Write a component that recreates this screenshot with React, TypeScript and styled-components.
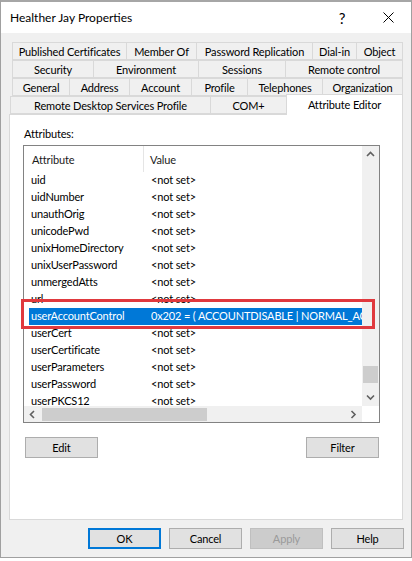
import styled, { createGlobalStyle } from "styled-components";

const GlobalStyle = createGlobalStyle`
  html, body {
    margin: 0;
    padding: 0;
    background: #ffffff;
  }
  body {
    font-family: Lato, "Liberation Sans", sans-serif;
    font-size: 11px;
    letter-spacing: -0.15px;
    color: #000;
  }
  * {
    box-sizing: border-box;
  }
`;

const Window = styled.div`
  width: 412px;
  height: 558px;
  display: flex;
  flex-direction: column;
  border: 1px solid #a0a0a0;
  border-top: 2px solid #a6a6a6;
  background: #f0f0f0;
`;

const TitleBar = styled.div`
  height: 31px;
  flex: none;
  display: flex;
  align-items: center;
  background: #ffffff;
  padding-left: 9px;
`;

const Title = styled.div`
  flex: 1;
  font-size: 12px;
  letter-spacing: 0;
  color: #000;
`;

const CaptionButton = styled.div`
  width: 46px;
  height: 31px;
  display: flex;
  align-items: center;
  justify-content: center;
  font-size: 15px;
`;

const Body = styled.div`
  flex: 1;
  display: flex;
  flex-direction: column;
  padding: 9px 8px 8px 8px;
`;

const TabStrip = styled.div`
  display: flex;
  flex-direction: column;
`;

const TabRow = styled.div<{ $inset: number }>`
  display: flex;
  align-items: flex-end;
  height: 18px;
  padding-left: ${(p) => p.$inset}px;
`;

const Tab = styled.div<{ $w: number; $active?: boolean }>`
  flex: none;
  width: ${(p) => p.$w + 1}px;
  height: ${(p) => (p.$active ? 21 : 18)}px;
  margin-right: -1px;
  margin-bottom: ${(p) => (p.$active ? -1 : 0)}px;
  z-index: ${(p) => (p.$active ? 2 : 0)};
  border: 1px solid #d9d9d9;
  border-bottom: ${(p) => (p.$active ? "none" : "1px solid #d9d9d9")};
  background: ${(p) => (p.$active ? "#ffffff" : "#f0f0f0")};
  display: flex;
  align-items: center;
  justify-content: center;
  white-space: nowrap;
  padding-bottom: ${(p) => (p.$active ? 2 : 0)}px;
`;

const Panel = styled.div`
  height: 406px;
  flex: none;
  background: #ffffff;
  border: 1px solid #d9d9d9;
  padding: 11px 13px 0 13px;
  display: flex;
  flex-direction: column;
`;

const FieldLabel = styled.div`
  line-height: 15px;
  padding-left: 1px;
  margin-bottom: 4px;
`;

const ListWrap = styled.div`
  position: relative;
  width: 357px;
  height: 278px;
`;

const ListBox = styled.div`
  width: 100%;
  height: 100%;
  border: 1px solid #828282;
  display: grid;
  grid-template-columns: 1fr 17px;
  grid-template-rows: 1fr 16px;
  background: #ffffff;
`;

const ListContent = styled.div`
  overflow: hidden;
  display: flex;
  flex-direction: column;
`;

const HeaderRow = styled.div`
  height: 26px;
  flex: none;
  display: grid;
  grid-template-columns: 120px 1fr;
  color: #1a1a1a;
`;

const HeaderCell = styled.div<{ $first?: boolean }>`
  display: flex;
  align-items: center;
  padding-left: ${(p) => (p.$first ? 8 : 6)}px;
  border-right: ${(p) => (p.$first ? "1px solid #e5e5e5" : "none")};
`;

const ItemRow = styled.div<{ $selected?: boolean }>`
  height: 17px;
  flex: none;
  margin-left: 5px;
  display: grid;
  grid-template-columns: 122px 1fr;
  line-height: 16px;
  white-space: nowrap;
  background: ${(p) => (p.$selected ? "#0078d7" : "transparent")};
  color: ${(p) => (p.$selected ? "#ffffff" : "#000")};
`;

const ItemCell = styled.div<{ $first?: boolean }>`
  overflow: hidden;
  padding-left: ${(p) => (p.$first ? 2 : 0)}px;
`;

const VScroll = styled.div`
  background: #f0f0f0;
  display: flex;
  flex-direction: column;
`;

const HScroll = styled.div`
  background: #f0f0f0;
  display: flex;
`;

const ArrowBox = styled.div<{ $horizontal?: boolean }>`
  flex: none;
  width: 17px;
  height: ${(p) => (p.$horizontal ? 16 : 17)}px;
  display: flex;
  align-items: center;
  justify-content: center;
`;

const Track = styled.div`
  flex: 1;
  position: relative;
`;

const VThumb = styled.div`
  position: absolute;
  left: 1px;
  right: 1px;
  height: 17px;
  background: #cdcdcd;
`;

const HThumb = styled.div`
  position: absolute;
  top: 2px;
  bottom: 1px;
  background: #cdcdcd;
`;

const Corner = styled.div`
  background: #ffffff;
`;

const Callout = styled.div`
  position: absolute;
  left: -2px;
  top: 154px;
  width: 354px;
  height: 30px;
  border: 3px solid #e0393e;
  pointer-events: none;
`;

const ButtonRow = styled.div`
  display: flex;
  justify-content: space-between;
  width: 357px;
  margin-top: 14px;
  padding: 0 1px 0 2px;
`;

const Button = styled.div<{ $default?: boolean; $disabled?: boolean }>`
  width: 73px;
  height: 21px;
  display: flex;
  align-items: center;
  justify-content: center;
  background: ${(p) => (p.$disabled ? "#cccccc" : "#e1e1e1")};
  border: ${(p) =>
    p.$default ? "2px solid #0078d7" : p.$disabled ? "1px solid #bfbfbf" : "1px solid #adadad"};
  color: ${(p) => (p.$disabled ? "#9a9a9a" : "#000")};
`;

const Footer = styled.div`
  display: flex;
  justify-content: flex-end;
  gap: 8px;
  margin-top: 8px;
  margin-right: -1px;
`;

const Chevron = ({ dir }: { dir: "up" | "down" | "left" | "right" }) => {
  const pts = {
    up: "1,5 4.5,1.5 8,5",
    down: "1,1.5 4.5,5 8,1.5",
    left: "5,1 1.5,4.5 5,8",
    right: "1.5,1 5,4.5 1.5,8",
  }[dir];
  const vertical = dir === "up" || dir === "down";
  return (
    <svg width={vertical ? 9 : 7} height={vertical ? 7 : 9} viewBox={vertical ? "0 0 9 7" : "0 0 7 9"}>
      <polyline points={pts} fill="none" stroke="#606060" strokeWidth="1.6" />
    </svg>
  );
};

const tabRows: { inset: number; tabs: [string, number, boolean?][] }[] = [
  {
    inset: 3,
    tabs: [
      ["Published Certificates", 114],
      ["Member Of", 70],
      ["Password Replication", 116],
      ["Dial-in", 44],
      ["Object", 46],
    ],
  },
  {
    inset: 3,
    tabs: [
      ["Security", 81],
      ["Environment", 105],
      ["Sessions", 87],
      ["Remote control", 117],
    ],
  },
  {
    inset: 3,
    tabs: [
      ["General", 57],
      ["Address", 60],
      ["Account", 62],
      ["Profile", 56],
      ["Telephones", 75],
      ["Organization", 80],
    ],
  },
  {
    inset: 1,
    tabs: [
      ["Remote Desktop Services Profile", 200],
      ["COM+", 76],
      ["Attribute Editor", 116, true],
    ],
  },
];

const attributes: [string, string][] = [
  ["uid", "<not set>"],
  ["uidNumber", "<not set>"],
  ["unauthOrig", "<not set>"],
  ["unicodePwd", "<not set>"],
  ["unixHomeDirectory", "<not set>"],
  ["unixUserPassword", "<not set>"],
  ["unmergedAtts", "<not set>"],
  ["url", "<not set>"],
  ["userAccountControl", "0x202 = ( ACCOUNTDISABLE | NORMAL_ACCOUNT )"],
  ["userCert", "<not set>"],
  ["userCertificate", "<not set>"],
  ["userParameters", "<not set>"],
  ["userPassword", "<not set>"],
  ["userPKCS12", "<not set>"],
];

export default function App() {
  const selected = "userAccountControl";

  return (
    <>
      <GlobalStyle />
      <Window>
        <TitleBar>
          <Title>Healther Jay Properties</Title>
          <CaptionButton>?</CaptionButton>
          <CaptionButton>
            <svg width="11" height="11" viewBox="0 0 11 11">
              <path d="M0.5 0.5 L10.5 10.5 M10.5 0.5 L0.5 10.5" stroke="#000" strokeWidth="1" />
            </svg>
          </CaptionButton>
        </TitleBar>

        <Body>
          <TabStrip>
            {tabRows.map((row, i) => (
              <TabRow key={i} $inset={row.inset}>
                {row.tabs.map(([label, w, active]) => (
                  <Tab key={label} $w={w} $active={active}>
                    {label}
                  </Tab>
                ))}
              </TabRow>
            ))}
          </TabStrip>

          <Panel>
            <FieldLabel>Attributes:</FieldLabel>
            <ListWrap>
              <ListBox>
                <ListContent>
                  <HeaderRow>
                    <HeaderCell $first>Attribute</HeaderCell>
                    <HeaderCell>Value</HeaderCell>
                  </HeaderRow>
                  {attributes.map(([name, value]) => (
                    <ItemRow key={name} $selected={name === selected}>
                      <ItemCell $first>{name}</ItemCell>
                      <ItemCell>{value}</ItemCell>
                    </ItemRow>
                  ))}
                </ListContent>
                <VScroll>
                  <ArrowBox>
                    <Chevron dir="up" />
                  </ArrowBox>
                  <Track>
                    <VThumb style={{ top: 203 }} />
                  </Track>
                  <ArrowBox>
                    <Chevron dir="down" />
                  </ArrowBox>
                </VScroll>
                <HScroll>
                  <ArrowBox $horizontal>
                    <Chevron dir="left" />
                  </ArrowBox>
                  <Track>
                    <HThumb style={{ left: 1, width: 165 }} />
                  </Track>
                  <ArrowBox $horizontal>
                    <Chevron dir="right" />
                  </ArrowBox>
                </HScroll>
                <Corner />
              </ListBox>
              <Callout />
            </ListWrap>
            <ButtonRow>
              <Button>Edit</Button>
              <Button>Filter</Button>
            </ButtonRow>
          </Panel>

          <Footer>
            <Button $default>OK</Button>
            <Button>Cancel</Button>
            <Button $disabled>Apply</Button>
            <Button>Help</Button>
          </Footer>
        </Body>
      </Window>
    </>
  );
}
